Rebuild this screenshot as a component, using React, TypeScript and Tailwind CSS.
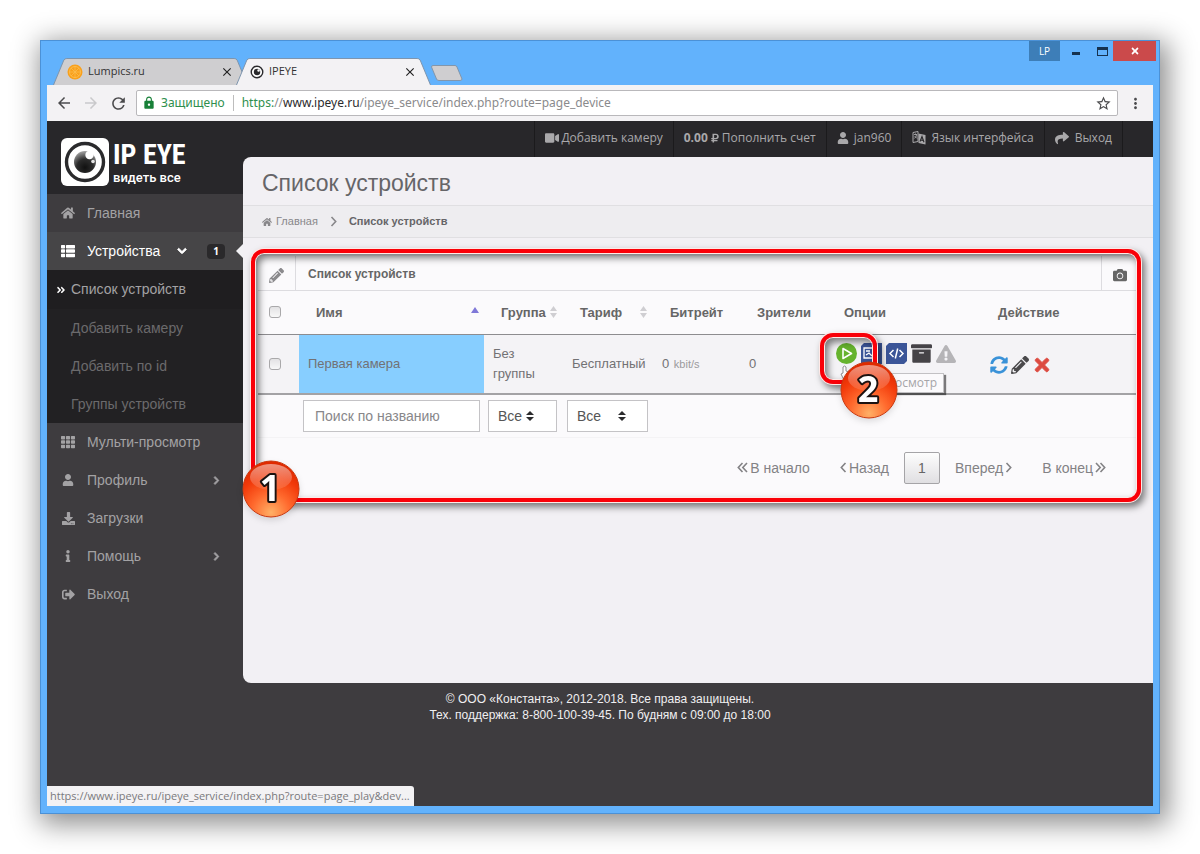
import type { ReactNode } from 'react';
import {
  FaAngleDoubleRight,
  FaArchive,
  FaCamera,
  FaChevronDown,
  FaChevronRight,
  FaDownload,
  FaExclamationTriangle,
  FaHome,
  FaInfo,
  FaPencilAlt,
  FaRubleSign,
  FaShare,
  FaSignOutAlt,
  FaSyncAlt,
  FaTh,
  FaThList,
  FaTimes,
  FaUser,
  FaVideo,
} from 'react-icons/fa';
import { MdArrowBack, MdArrowForward, MdClose, MdLock, MdMoreVert, MdRefresh, MdStarBorder } from 'react-icons/md';

function Badge({ value, className }: { value: string; className: string }) {
  const id = `ball-${value}`;
  return (
    <svg className={`absolute size-[58px] drop-shadow-md ${className}`} viewBox="0 0 58 58" aria-label={value}>
      <defs>
        <radialGradient id={id} cx="50%" cy="92%" r="85%">
          <stop offset="0" stopColor="#ffb066" />
          <stop offset="0.4" stopColor="#ff6a2e" />
          <stop offset="0.75" stopColor="#f23a0a" />
          <stop offset="1" stopColor="#e02a00" />
        </radialGradient>
        <linearGradient id={`${id}-gloss`} x1="0" y1="0" x2="0" y2="1">
          <stop offset="0" stopColor="#fff" stopOpacity="0.5" />
          <stop offset="1" stopColor="#fff" stopOpacity="0.08" />
        </linearGradient>
      </defs>
      <circle cx="29" cy="29" r="28" fill={`url(#${id})`} stroke="#c8380f" />
      <ellipse cx="29" cy="17" rx="21" ry="13" fill={`url(#${id}-gloss)`} />
      <text
        x="28"
        y="41"
        textAnchor="middle"
        className="font-['Open_Sans',sans-serif] text-[36px] font-bold"
        fill="#fff"
        stroke="#1b1210"
        strokeWidth="4"
        strokeLinejoin="round"
        paintOrder="stroke"
      >
        {value}
      </text>
    </svg>
  );
}

function Frame({ className }: { className: string }) {
  return (
    <div
      className={`pointer-events-none absolute rounded-[13px] border-4 border-[#f90008] shadow-[0_0_0_1px_#ffe9e6,inset_0_0_0_1px_#ffe9e6,3px_4px_7px_1px_rgba(0,0,0,0.5),inset_3px_4px_7px_1px_rgba(0,0,0,0.5)] ${className}`}
    />
  );
}

function EyeIcon({ className }: { className: string }) {
  return (
    <svg className={className} viewBox="0 0 16 16">
      <circle cx="8" cy="8" r="6.6" fill="#fff" stroke="#2a2a2c" strokeWidth="1.6" />
      <circle cx="8" cy="8" r="3.7" fill="#2a2a2c" />
      <circle cx="9.8" cy="6.3" r="1.4" fill="#fff" />
    </svg>
  );
}

function LanguageIcon() {
  return (
    <svg className="size-[14px]" viewBox="0 0 14 14">
      <path d="M1 1.500 L6 0.500 V10.500 L1 11.500 Z" fill="none" stroke="currentColor" />
      <path d="M2 3.500 H5 M3.500 2.500 V3.500 M2.300 7.500 Q4.500 6 4.600 3.500 M2.600 5 L5 7.500" fill="none" stroke="currentColor" strokeWidth="0.900" />
      <path d="M6.500 2.500 L13.500 4 V13.500 L6.500 12 Z" fill="currentColor" />
      <path d="M8 10.500 L10 5.500 L12 11.200 M8.700 9 L11.300 9.500" fill="none" stroke="#28272a" strokeWidth="1.100" />
    </svg>
  );
}

function Chevron({ left, double }: { left?: boolean; double?: boolean }) {
  return (
    <svg
      className={`h-[11px] ${double ? 'w-[11px]' : 'w-[7px]'} ${left ? 'rotate-180' : ''}`}
      viewBox={double ? '0 0 11 11' : '0 0 7 11'}
      fill="none"
      stroke="currentColor"
      strokeWidth="1.600"
    >
      <path d={double ? 'M1 1 L5.200 5.500 L1 10 M5.500 1 L9.700 5.500 L5.500 10' : 'M1.500 1 L5.700 5.500 L1.500 10'} />
    </svg>
  );
}

function Logo() {
  return (
    <a href="#home" className="flex items-center gap-1 text-white">
      <svg className="size-12 shrink-0" viewBox="0 0 48 48">
        <defs>
          <radialGradient id="pupil" cx="50%" cy="75%" r="75%">
            <stop offset="0" stopColor="#111" />
            <stop offset="0.5" stopColor="#2c2c2c" />
            <stop offset="1" stopColor="#a5a5a5" />
          </radialGradient>
        </defs>
        <rect width="48" height="48" rx="6" fill="#fff" />
        <circle cx="24" cy="24" r="18.5" fill="#fff" stroke="#2a2a2c" strokeWidth="3.4" />
        <circle cx="24" cy="24" r="11" fill="url(#pupil)" />
        <circle cx="28.5" cy="17" r="4.2" fill="#fff" />
        <circle cx="32" cy="23.5" r="1.8" fill="#e6e6e6" />
      </svg>
      <span className="flex flex-col pt-px">
        <span className="font-['Liberation_Sans_Narrow','Roboto_Condensed','Liberation_Sans',sans-serif] text-[28px] leading-8 font-bold whitespace-nowrap">
          IP EYE
        </span>
        <span className="font-['Roboto',sans-serif] text-[13px] leading-[14px] font-medium whitespace-nowrap">видеть все</span>
      </span>
    </a>
  );
}

function BrowserTab({
  title,
  icon,
  active,
  className,
}: {
  title: string;
  icon: ReactNode;
  active?: boolean;
  className: string;
}) {
  return (
    <div className={`relative flex h-[27px] w-[195px] items-center pr-[14px] pl-[14px] text-[#333] ${className}`}>
      <svg className="absolute inset-0 size-full" viewBox="0 0 197 27" preserveAspectRatio="none">
        <path
          d="M0.500 27 L11 2 Q12 0.500 14 0.500 H183 Q185 0.500 186 2 L196.500 27"
          fill={active ? '#f3f2f4' : '#cfced0'}
          stroke="#7d94ad"
        />
      </svg>
      <span className="relative flex w-full items-center gap-[5px]">
        {icon}
        <span className="grow text-[11px]">{title}</span>
        <button aria-label={`Закрыть ${title}`} className="text-[#222]">
          <MdClose className="size-[14px]" />
        </button>
      </span>
    </div>
  );
}

function TitleBar() {
  return (
    <div className="flex h-11 justify-between pr-[3px] pl-3">
      <div className="flex items-end">
        <BrowserTab
          title="Lumpics.ru"
          className=""
          icon={
            <svg className="size-4" viewBox="0 0 16 16">
              <circle cx="8" cy="8" r="7.500" fill="#f9a01b" />
              <circle cx="8" cy="8" r="5.500" fill="none" stroke="#fdbb4b" />
              <path d="M8 2v12M2 8h12M4 4l8 8M12 4l-8 8" stroke="#fdbb4b" strokeWidth="0.800" />
            </svg>
          }
        />
        <BrowserTab title="IPEYE" active className="-ml-3" icon={<EyeIcon className="size-[14px]" />} />
        <button aria-label="Новая вкладка" className="mb-1">
          <svg className="h-4 w-8" viewBox="0 0 32 16">
            <path d="M0.500 2 Q0.500 0.500 2 0.500 H24 Q25.500 0.500 26 2 L31 14 Q31 15.500 29 15.500 H8 Q6 15.500 5.500 14 Z" fill="#cfced0" stroke="#8296ab" />
          </svg>
        </button>
      </div>
      <div className="flex h-5 text-[#16324f]">
        <button className="w-[31px] bg-[#3d7eb8] text-[10px] text-white">LP</button>
        <button aria-label="Свернуть" className="flex w-[31px] items-center justify-center">
          <span className="mt-1 h-[3px] w-2 bg-current" />
        </button>
        <button aria-label="Развернуть" className="flex w-[22px] items-center justify-center">
          <span className="h-[9px] w-[11px] border border-t-[3px] border-current" />
        </button>
        <button aria-label="Закрыть" className="flex w-[43px] items-center justify-center bg-[#cb4a4b] text-white">
          <FaTimes className="size-[10px]" />
        </button>
      </div>
    </div>
  );
}

function AddressBar() {
  return (
    <div className="flex h-9 items-center gap-[9px] bg-[#f3f2f4] pr-[9px] pl-2 text-[#4b4b4d]">
      <button aria-label="Назад">
        <MdArrowBack className="size-[18px]" />
      </button>
      <button aria-label="Вперед" className="text-[#c9c9cb]">
        <MdArrowForward className="size-[18px]" />
      </button>
      <button aria-label="Обновить">
        <MdRefresh className="size-[19px]" />
      </button>
      <div className="-ml-px flex h-[26px] min-w-0 grow items-center rounded-xs border border-[#b9b8bb] bg-white px-[5px] font-['Noto_Sans',sans-serif] text-xs">
        <MdLock className="mr-[5px] size-[14px] text-[#188038]" />
        <span className="text-[#2f8f4e]">Защищено</span>
        <span className="mx-2 h-4 w-px bg-[#bdbdbd]" />
        <span className="grow truncate text-[#8a8a8c]">
          <span className="text-[#2f8f4e]">https:</span>//<span className="text-[#2b2b2d]">www.ipeye.ru</span>
          /ipeye_service/index.php?route=page_device
        </span>
        <button aria-label="Добавить в закладки">
          <MdStarBorder className="size-[17px]" />
        </button>
      </div>
      <button aria-label="Меню">
        <MdMoreVert className="size-[17px]" />
      </button>
    </div>
  );
}

function SideLink({ icon, label, children, active }: { icon: ReactNode; label: string; children?: ReactNode; active?: boolean }) {
  return (
    <a
      href="#section"
      className={`relative flex h-[38px] items-center pr-[22px] pl-[14px] text-[14px] ${active ? 'bg-[#464547] text-white' : 'text-[#a3a2a4]'}`}
    >
      <span className="mr-3 flex w-[14px] justify-center">{icon}</span>
      <span className="shrink-0 grow">{label}</span>
      {children}
    </a>
  );
}

function Sidebar() {
  const sub = ['Добавить камеру', 'Добавить по id', 'Группы устройств'];
  return (
    <aside className="w-[196px] shrink-0">
      <div className="flex h-[73px] items-center bg-[#28272a] pt-2 pl-[14px]">
        <Logo />
      </div>
      <nav>
        <SideLink icon={<FaHome className="size-[14px]" />} label="Главная" />
        <SideLink active icon={<FaThList className="size-[14px]" />} label="Устройства">
          <FaChevronDown className="mr-5 size-[10px] stroke-current stroke-[50]" />
          <span className="-mr-1 rounded-sm bg-[#2a292b] px-[6px] font-['Open_Sans',sans-serif] text-[10px] leading-[15px] font-bold">1</span>
          <svg className="absolute right-0 h-[14px] w-[7px]" viewBox="0 0 7 14">
            <path d="M7 0 L0 7 L7 14 Z" fill="#f2f1f4" />
          </svg>
        </SideLink>
        <div className="bg-[#222123] text-[14px] text-[#6b6a6c]">
          <a href="#list" className="flex h-[39px] items-center bg-[#1f1e20] pl-[9px] text-[#a3a2a4]">
            <FaAngleDoubleRight className="mr-[5px] size-[10px] text-white" />
            Список устройств
          </a>
          {sub.map((s) => (
            <a key={s} href="#sub" className="flex h-[38px] items-center pl-6">
              {s}
            </a>
          ))}
        </div>
        <SideLink icon={<FaTh className="size-[14px]" />} label="Мульти-просмотр" />
        <SideLink icon={<FaUser className="size-[12px]" />} label="Профиль">
          <FaChevronRight className="size-[9px] stroke-current stroke-[50]" />
        </SideLink>
        <SideLink icon={<FaDownload className="size-[13px]" />} label="Загрузки" />
        <SideLink icon={<FaInfo className="size-[12px]" />} label="Помощь">
          <FaChevronRight className="size-[9px] stroke-current stroke-[50]" />
        </SideLink>
        <SideLink icon={<FaSignOutAlt className="size-[13px]" />} label="Выход" />
      </nav>
    </aside>
  );
}

function TopNav() {
  const item = 'flex items-center border-r border-[#1b1a1c] px-[10px] pb-[3px]';
  return (
    <nav className="flex h-9 justify-end bg-[#28272a] pr-[30px] font-['Open_Sans',sans-serif] text-xs whitespace-nowrap text-[#a9a8aa]">
      <a href="#add" className={`${item} gap-[2px] border-l`}>
        <FaVideo className="size-[14px]" />
        Добавить камеру
      </a>
      <a href="#pay" className={`${item} gap-[2px]`}>
        <b>0.00</b>
        <FaRubleSign className="size-[10px]" />
        Пополнить счет
      </a>
      <a href="#user" className={`${item} gap-[5px]`}>
        <FaUser className="size-[12px]" />
        jan960
      </a>
      <a href="#lang" className={`${item} gap-[5px]`}>
        <LanguageIcon />
        Язык интерфейса
      </a>
      <a href="#exit" className={`${item} gap-[6px]`}>
        <FaShare className="size-[14px]" />
        Выход
      </a>
    </nav>
  );
}

function Tick({ label }: { label: string }) {
  return (
    <input
      type="checkbox"
      aria-label={label}
      className="block size-3 appearance-none rounded-[3px] border border-[#a9a8aa] bg-linear-to-b from-[#e3e2e4] to-[#f8f8f8]"
    />
  );
}

function SortArrows() {
  return (
    <svg className="h-3 w-[7px]" viewBox="0 0 7 12">
      <path d="M3.500 0 L7 5 H0 Z M3.500 12 L7 7 H0 Z" fill="#cfced2" />
    </svg>
  );
}

function Filter({ label, wide }: { label: string; wide?: boolean }) {
  return (
    <div className={`relative ${wide ? 'w-[81px]' : 'w-[69px]'}`}>
      <select
        aria-label={label}
        className="block h-8 w-full appearance-none border border-[#c4c3c6] bg-white pl-[9px] text-sm text-[#555]"
      >
        <option>Все</option>
      </select>
      <svg className={`pointer-events-none absolute top-[11px] h-[10px] w-2 ${wide ? 'left-[51px]' : 'left-[38px]'}`} viewBox="0 0 8 10">
        <path d="M4 0 L8 4 H0 Z M4 10 L8 6 H0 Z" fill="#2b2b2d" />
      </svg>
    </div>
  );
}

function OptionIcons() {
  return (
    <div className="relative flex items-center gap-1 pb-5">
      <a href="#play" aria-label="Просмотр">
        <svg className="size-[21px]" viewBox="0 0 21 21">
          <circle cx="10.500" cy="10.500" r="10.500" fill="#66b32e" />
          <path d="M7 5.500 L15.500 10.500 L7 15.500 Z" fill="none" stroke="#fff" strokeWidth="1.600" strokeLinejoin="round" />
        </svg>
      </a>
      <a href="#archive" aria-label="Запись">
        <svg className="size-[21px]" viewBox="0 0 21 21">
          <path d="M3 0 H21 V21 H0 V3 Z" fill="#3b5598" />
          <path d="M3 5 H13 V15 H3 Z M5 8 H9 M5 12 L8 10 L11 13" fill="none" stroke="#fff" strokeWidth="1.300" />
        </svg>
      </a>
      <a href="#code" aria-label="Код">
        <svg className="size-[21px]" viewBox="0 0 21 21">
          <path d="M3 0 H21 V18 L18 21 H0 V3 Z" fill="#3b5598" />
          <path d="M7.500 7 L4 10.500 L7.500 14 M13.500 7 L17 10.500 L13.500 14 M11.700 5.500 L9.300 15.500" fill="none" stroke="#fff" strokeWidth="1.500" />
        </svg>
      </a>
      <a href="#box" aria-label="Архив" className="text-[#454347]">
        <FaArchive className="size-[21px]" />
      </a>
      <a href="#warn" aria-label="Предупреждение" className="text-[#b5b4b7]">
        <FaExclamationTriangle className="size-5" />
      </a>
      <svg className="absolute top-[22px] left-1 h-4 w-3" viewBox="0 0 12 16">
        <path d="M3 8 V2 Q4.500 0 6 2 V6 L11 8 V15 H4 L1 9 Z" fill="#fff" stroke="#8f8e91" />
      </svg>
      <span className="absolute top-[30px] left-9 border border-[#c2c1c4] bg-[#fbfafc] px-[6px] font-['Open_Sans',sans-serif] text-xs leading-[18px] text-[#a6a5a8] shadow-[2px_2px_1px_rgba(0,0,0,0.5)]">
        Просмотр
      </span>
      <Frame className="-top-[10px] -left-4 h-[51px] w-[57px]" />
      <Badge value="2" className="top-[18px] left-1" />
    </div>
  );
}

function DeviceTable() {
  const th = 'pl-[17px] text-left font-bold';
  const page = 'flex h-8 items-center gap-[2px] px-[15px]';
  return (
    <section className="relative mt-[18px] mr-4 ml-[15px] bg-[#fbfafc]">
      <header className="flex h-[35px] items-stretch border-b border-[#dddce0] text-xs font-bold text-[#666]">
        <span className="flex w-[38px] items-center justify-center border-r border-[#dddce0] pt-1">
          <FaPencilAlt className="size-[15px] text-[#8b8a8d]" />
        </span>
        <h2 className="grow pt-[10px] pl-3 leading-4">Список устройств</h2>
        <button aria-label="Снимок" className="flex w-9 items-center justify-center border-l border-[#dddce0] pt-1 text-[#666]">
          <FaCamera className="size-[14px]" />
        </button>
      </header>
      <table className="w-full table-fixed border-collapse text-[13px] text-[#727174]">
        <colgroup>
          <col className="w-[41px]" />
          <col className="w-[185px]" />
          <col className="w-[79px]" />
          <col className="w-[90px]" />
          <col className="w-[87px]" />
          <col className="w-[87px]" />
          <col className="w-[154px]" />
          <col />
        </colgroup>
        <thead>
          <tr className="h-[43px] border-b border-[#8d8c8f] text-[#666]">
            <th className="pl-[11px]">
              <Tick label="Выбрать все" />
            </th>
            <th className={th}>
              <span className="flex items-center justify-between pr-[5px]">
                Имя
                <svg className="mb-1 h-[6px] w-2" viewBox="0 0 8 6">
                  <path d="M4 0 L8 6 H0 Z" fill="#7f78d8" />
                </svg>
              </span>
            </th>
            <th className={th}>
              <span className="flex items-center justify-between pr-[6px]">
                Группа
                <SortArrows />
              </span>
            </th>
            <th className={th}>
              <span className="flex items-center justify-between pr-[6px]">
                Тариф
                <SortArrows />
              </span>
            </th>
            <th className={th}>Битрейт</th>
            <th className={th}>Зрители</th>
            <th className={th}>Опции</th>
            <th className={th}>Действие</th>
          </tr>
        </thead>
        <tbody>
          <tr className="h-[60px] border-b-2 border-[#a3a2a5] bg-[#f4f3f6]">
            <td className="pl-[11px]">
              <Tick label="Выбрать Первая камера" />
            </td>
            <td className="bg-[#87ceff] pl-[9px]">Первая камера</td>
            <td className="pl-[9px] leading-5">
              Без
              <br />
              группы
            </td>
            <td className="pl-[9px]">Бесплатный</td>
            <td className="pl-[9px]">
              0 <small className="ml-px text-[11px] text-[#9b9a9d]">kbit/s</small>
            </td>
            <td className="pl-[9px]">0</td>
            <td className="pl-[9px]">
              <OptionIcons />
            </td>
            <td className="pl-[9px]">
              <span className="flex items-center gap-[3px] pt-[2px]">
                <button aria-label="Обновить">
                  <FaSyncAlt className="size-[18px] text-[#3a92d8]" />
                </button>
                <button aria-label="Изменить">
                  <FaPencilAlt className="size-[18px] text-[#4a494b]" />
                </button>
                <button aria-label="Удалить">
                  <FaTimes className="size-[20px] stroke-current stroke-[20] text-[#dc4a40]" />
                </button>
              </span>
            </td>
          </tr>
          <tr className="h-[43px] border-b border-[#f4f3f5]">
            <td />
            <td className="px-1">
              <input
                aria-label="Поиск по названию"
                placeholder="Поиск по названию"
                className="block h-8 w-full border border-[#c4c3c6] bg-white px-[11px] text-sm placeholder:text-[#88878a]"
              />
            </td>
            <td className="pl-1">
              <Filter label="Группа" />
            </td>
            <td className="pl-1">
              <Filter label="Тариф" wide />
            </td>
            <td colSpan={4} />
          </tr>
        </tbody>
      </table>
      <nav className="flex justify-end pt-[14px] pr-4 pb-[14px] text-sm text-[#838285]">
        <a href="#first" className={page}>
          <Chevron left double />
          В начало
        </a>
        <a href="#prev" className={page}>
          <Chevron left />
          Назад
        </a>
        <a href="#1" className="flex h-8 w-9 items-center justify-center rounded-[2px] border border-[#a5a4a7] bg-linear-to-b from-[#fdfdfd] to-[#e0dfe2] text-[#666]">
          1
        </a>
        <a href="#next" className={page}>
          Вперед
          <Chevron />
        </a>
        <a href="#last" className={page}>
          В конец
          <Chevron double />
        </a>
      </nav>
      <Frame className="-top-[7px] -right-1 -bottom-1 -left-[7px]" />
      <Badge value="1" className="-bottom-5 -left-4" />
    </section>
  );
}

export default function App() {
  return (
    <div className="min-h-screen bg-white p-10 font-['Liberation_Sans',Arial,sans-serif]">
      <div className="flex min-h-[774px] flex-col border border-[#4b91d6] bg-[#62b2fc] pb-[7px] shadow-[4px_6px_26px_4px_rgba(0,0,0,0.45)]">
        <div className="font-['Open_Sans',sans-serif]">
          <TitleBar />
          <div className="mx-[6px]">
            <AddressBar />
          </div>
        </div>
        <div className="relative mx-[6px] flex grow flex-col bg-[#3e3c3f]">
          <div className="flex">
            <Sidebar />
            <div className="min-w-0 grow bg-linear-to-b from-[#28272a] from-50% to-[#3e3c3f] to-50%">
              <TopNav />
              <main className="min-h-[526px] rounded-l-lg bg-[#f2f0f4]">
                <div className="flex h-[49px] items-center border-b border-[#e0dfe2] pt-[5px] pl-[19px]">
                  <h1 className="text-[23px] text-[#666568]">Список устройств</h1>
                </div>
                <nav className="flex h-8 items-center border-b border-[#e0dfe2] bg-[#eeedf0] pl-[19px] text-[11px] text-[#88878a]">
                  <FaHome className="mr-1 size-[10px]" />
                  <a href="#home" className="mr-3">
                    Главная
                  </a>
                  <Chevron />
                  <b className="ml-3 text-[#666568]">Список устройств</b>
                </nav>
                <DeviceTable />
              </main>
            </div>
          </div>
          <footer className="pt-2 text-center text-xs leading-4 text-[#f0eff1]">
            <p>© ООО «Константа», 2012-2018. Все права защищены.</p>
            <p>Тех. поддержка: 8-800-100-39-45. По будням с 09:00 до 18:00</p>
          </footer>
          <div className="absolute bottom-0 left-0 rounded-tr-[3px] bg-[#f3f2f4] pr-1 pl-[3px] font-['Open_Sans',sans-serif] text-[11px] leading-5 text-[#7a797c]">
            https://www.ipeye.ru/ipeye_service/index.php?route=page_play&amp;dev...
          </div>
        </div>
      </div>
    </div>
  );
}
